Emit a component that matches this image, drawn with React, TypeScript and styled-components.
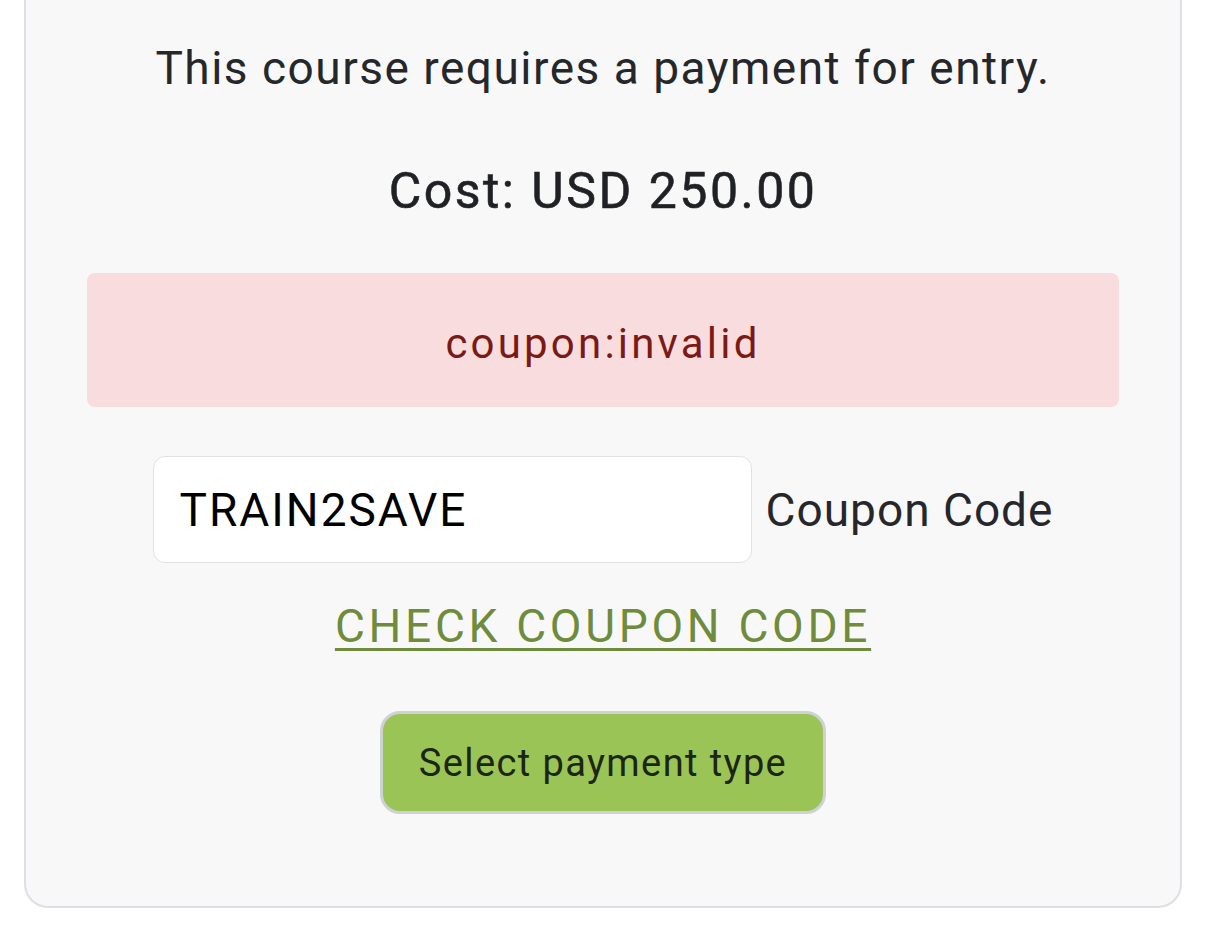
import React from "react";
import styled, { createGlobalStyle } from "styled-components";

const GlobalStyle = createGlobalStyle`
  html, body {
    margin: 0;
    padding: 0;
    background: #ffffff;
  }
  body {
    font-family: Roboto, "Liberation Sans", sans-serif;
    color: #212529;
  }
`;

const Card = styled.section`
  box-sizing: border-box;
  width: 1158px;
  height: 908px;
  margin: 0 0 0 24px;
  padding: 40px 61px 0;
  background: #f8f8f8;
  border: 2px solid #dedee4;
  border-top: none;
  border-radius: 0 0 24px 24px;
  display: flex;
  flex-direction: column;
  align-items: stretch;
`;

const Intro = styled.p`
  margin: 0;
  text-align: center;
  font-size: 46px;
  line-height: 56px;
  letter-spacing: 1.5px;
  font-weight: 400;
  color: #25272b;
`;

const Cost = styled.p`
  margin: 65px 0 0;
  text-align: center;
  font-size: 50px;
  line-height: 60px;
  letter-spacing: 2.5px;
  font-weight: 400;
  color: #1f2125;
  -webkit-text-stroke: 0.6px #1f2125;
`;

const Alert = styled.div`
  margin-top: 52px;
  height: 134px;
  border-radius: 8px;
  background: #f9dcdd;
  color: #7b1a14;
  display: flex;
  align-items: center;
  justify-content: center;
  font-size: 42px;
  letter-spacing: 3.2px;
  padding-top: 6px;
  box-sizing: border-box;
`;

const CouponRow = styled.div`
  margin-top: 49px;
  display: flex;
  align-items: center;
  justify-content: center;
  gap: 14px;
`;

const CouponInput = styled.input`
  box-sizing: border-box;
  width: 599px;
  height: 107px;
  padding: 0 26px;
  background: #ffffff;
  border: 1.5px solid #e2e2e2;
  border-radius: 12px;
  font-family: inherit;
  font-size: 46px;
  letter-spacing: 2px;
  color: #000000;
  outline: none;
`;

const CouponLabel = styled.label`
  font-size: 46px;
  letter-spacing: 1px;
  color: #25272b;
`;

const CheckLink = styled.a`
  margin: 35px auto 0;
  font-size: 46px;
  line-height: 56px;
  letter-spacing: 3.7px;
  color: #6e8c3c;
  text-decoration: underline;
  text-decoration-thickness: 3px;
  text-underline-offset: 6px;
  cursor: pointer;
`;

const PayButton = styled.button`
  margin: 57px auto 0;
  box-sizing: border-box;
  width: 446px;
  height: 103px;
  background: #9bc456;
  border: 3px solid #cfd2d4;
  border-radius: 20px;
  font-family: inherit;
  font-size: 38px;
  letter-spacing: 1.4px;
  color: #1b2614;
  cursor: pointer;
`;

export default function App() {
  return (
    <>
      <GlobalStyle />
      <Card>
        <Intro>This course requires a payment for entry.</Intro>
        <Cost>Cost: USD 250.00</Cost>
        <Alert>coupon:invalid</Alert>
        <CouponRow>
          <CouponInput id="coupon" defaultValue="TRAIN2SAVE" />
          <CouponLabel htmlFor="coupon">Coupon Code</CouponLabel>
        </CouponRow>
        <CheckLink>CHECK COUPON CODE</CheckLink>
        <PayButton>Select payment type</PayButton>
      </Card>
    </>
  );
}
